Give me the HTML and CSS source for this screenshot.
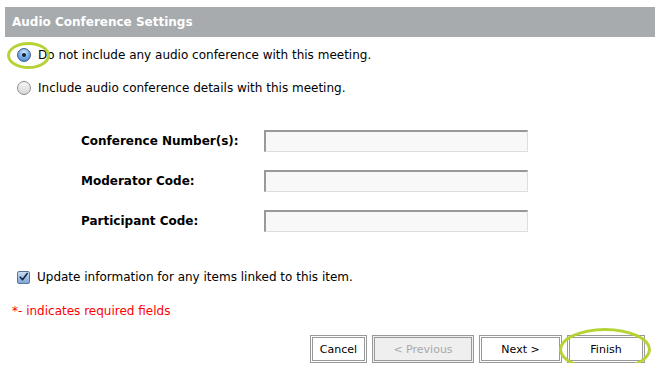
FILE: index.html
```html
<!DOCTYPE html>
<html lang="en">
<head>
    <meta charset="UTF-8">
    <title>Audio Conference Settings</title>
    <link rel="stylesheet" href="styles.css">
</head>
<body>
    <div class="panel">
        <div class="panel-header">Audio Conference Settings</div>

        <div class="options">
            <label class="option">
                <span class="radio checked"></span>
                <span class="option-text">Do not include any audio conference with this meeting.</span>
                <span class="highlight highlight-radio"></span>
            </label>
            <label class="option">
                <span class="radio"></span>
                <span class="option-text">Include audio conference details with this meeting.</span>
            </label>
        </div>

        <div class="fields">
            <div class="field-label">Conference Number(s):</div>
            <div class="field-input"></div>
            <div class="field-label">Moderator Code:</div>
            <div class="field-input"></div>
            <div class="field-label">Participant Code:</div>
            <div class="field-input"></div>
        </div>

        <label class="check-row">
            <span class="checkbox">
                <svg viewBox="0 0 12 12" width="12" height="12"><path d="M2.5 6.2 L5 9 L10 2.2" fill="none" stroke="#1b2a44" stroke-width="1.8" stroke-linecap="round" stroke-linejoin="round"/></svg>
            </span>
            <span class="option-text">Update information for any items linked to this item.</span>
        </label>

        <div class="required-note">*- indicates required fields</div>

        <div class="actions">
            <button class="btn">Cancel</button>
            <button class="btn btn-disabled">&lt; Previous</button>
            <button class="btn">Next &gt;</button>
            <button class="btn btn-finish">Finish<span class="highlight highlight-finish"></span></button>
        </div>
    </div>
</body>
</html>
```

FILE: styles.css
```css
body {
    margin: 0;
    background: #ffffff;
    font-family: "DejaVu Sans", Verdana, sans-serif;
    font-size: 12px;
    color: #000;
}

.panel {
    padding-top: 7px;
}

.panel-header {
    margin-left: 5px;
    height: 30px;
    line-height: 30px;
    padding-left: 7px;
    background-color: #a7abae;
    color: #ffffff;
    font-weight: bold;
    font-size: 12px;
}

.options {
    margin-top: 1px;
    padding-left: 17px;
}

.option {
    position: relative;
    display: flex;
    align-items: center;
    height: 33px;
}

.option-text {
    margin-left: 7px;
}

/* aqua-like radio */
.radio {
    width: 12px;
    height: 12px;
    border-radius: 50%;
    border: 1px solid #8c8c8c;
    background: linear-gradient(#f4f4f4, #d8d8d8);
    box-sizing: content-box;
    position: relative;
}

.radio.checked {
    border-color: #3d5f8f;
    background: radial-gradient(circle at 50% 30%, #d6e8fb 0%, #7fb0e6 45%, #3a78c8 100%);
}

.radio.checked::after {
    content: "";
    position: absolute;
    left: 4px;
    top: 4px;
    width: 4px;
    height: 4px;
    border-radius: 50%;
    background: #0f1f36;
}

/* green annotation circles */
.highlight {
    position: absolute;
    border: 3px solid #b6d335;
    border-radius: 50%;
    pointer-events: none;
}

.highlight-radio {
    left: -10px;
    top: 4px;
    width: 37px;
    height: 21px;
}

.fields {
    display: grid;
    grid-template-columns: 183px 264px;
    row-gap: 18px;
    margin-top: 26px;
    padding-left: 81px;
}

.field-label {
    font-weight: bold;
    font-size: 12px;
    display: flex;
    align-items: center;
    height: 22px;
}

.field-input {
    height: 22px;
    box-sizing: border-box;
    background: #f8f8f8;
    border-top: 2px solid #999;
    border-left: 2px solid #999;
    border-right: 1px solid #ddd;
    border-bottom: 1px solid #ddd;
}

.check-row {
    display: flex;
    align-items: center;
    height: 20px;
    margin-top: 35px;
    padding-left: 17px;
}

.checkbox {
    width: 11px;
    height: 11px;
    border: 1px solid #5b7396;
    border-radius: 2px;
    background: linear-gradient(#c9dcf3, #7ea7d8);
    display: flex;
    align-items: center;
    justify-content: center;
}

.required-note {
    margin-top: 16px;
    padding-left: 12px;
    height: 16px;
    line-height: 16px;
    color: #ff0000;
}

.actions {
    display: flex;
    justify-content: flex-end;
    gap: 5px;
    margin-top: 16px;
    padding-right: 10px;
}

.btn {
    position: relative;
    height: 28px;
    padding: 0 6px;
    border: 3px double #999;
    background: #ffffff;
    font-family: "DejaVu Sans", Verdana, sans-serif;
    font-size: 11px;
    color: #000;
    cursor: pointer;
}

.btn:nth-child(1) { width: 57px; }
.btn:nth-child(2) { width: 102px; }
.btn:nth-child(3) { width: 83px; }
.btn-finish { width: 78px; }

.btn-disabled {
    background: #efefef;
    color: #a8a8a8;
}

.highlight-finish {
    left: -11px;
    top: -10px;
    width: 86px;
    height: 37px;
}
```
